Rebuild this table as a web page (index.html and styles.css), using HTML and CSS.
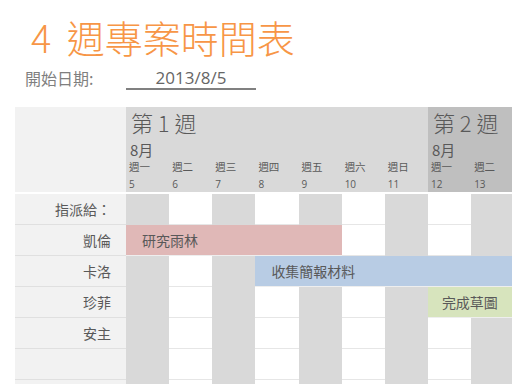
FILE: index.html
```html
<!DOCTYPE html>
<html lang="zh-Hant">
<head>
<meta charset="utf-8">
<title>4 週專案時間表</title>
<link rel="stylesheet" href="styles.css">
</head>
<body>
<div class="page">
  <h1 class="title">4 週專案時間表</h1>
  <div class="start">
    <span class="start-label">開始日期:</span>
    <span class="start-date">2013/8/5</span>
  </div>
  <div class="schedule">
    <div class="head">
      <div class="head-label"></div>
      <div class="week week-1">
        <div class="week-title">第 1 週</div>
        <div class="week-month">8月</div>
        <div class="days">
          <span>週一</span><span>週二</span><span>週三</span><span>週四</span><span>週五</span><span>週六</span><span>週日</span>
        </div>
        <div class="dates">
          <span>5</span><span>6</span><span>7</span><span>8</span><span>9</span><span>10</span><span>11</span>
        </div>
      </div>
      <div class="week week-2">
        <div class="week-title">第 2 週</div>
        <div class="week-month">8月</div>
        <div class="days">
          <span>週一</span><span>週二</span>
        </div>
        <div class="dates">
          <span>12</span><span>13</span>
        </div>
      </div>
    </div>

    <div class="row">
      <div class="name">指派給：</div>
      <div class="cell g"></div><div class="cell w"></div><div class="cell g"></div><div class="cell w"></div><div class="cell g"></div><div class="cell w"></div><div class="cell g"></div>
      <div class="cell w"></div><div class="cell g"></div>
    </div>

    <div class="row">
      <div class="name">凱倫</div>
      <div class="bar bar-pink span-5">研究雨林</div>
      <div class="cell w"></div><div class="cell g"></div>
      <div class="cell w"></div><div class="cell g"></div>
    </div>

    <div class="row">
      <div class="name">卡洛</div>
      <div class="cell g"></div><div class="cell w"></div><div class="cell g"></div>
      <div class="bar bar-blue span-6">收集簡報材料</div>
    </div>

    <div class="row">
      <div class="name">珍菲</div>
      <div class="cell g"></div><div class="cell w"></div><div class="cell g"></div><div class="cell w"></div><div class="cell g"></div><div class="cell w"></div><div class="cell g"></div>
      <div class="bar bar-green span-2">完成草圖</div>
    </div>

    <div class="row">
      <div class="name">安主</div>
      <div class="cell g"></div><div class="cell w"></div><div class="cell g"></div><div class="cell w"></div><div class="cell g"></div><div class="cell w"></div><div class="cell g"></div>
      <div class="cell w"></div><div class="cell g"></div>
    </div>

    <div class="row">
      <div class="name"></div>
      <div class="cell g"></div><div class="cell w"></div><div class="cell g"></div><div class="cell w"></div><div class="cell g"></div><div class="cell w"></div><div class="cell g"></div>
      <div class="cell w"></div><div class="cell g"></div>
    </div>

    <div class="row">
      <div class="name"></div>
      <div class="cell g"></div><div class="cell w"></div><div class="cell g"></div><div class="cell w"></div><div class="cell g"></div><div class="cell w"></div><div class="cell g"></div>
      <div class="cell w"></div><div class="cell g"></div>
    </div>
  </div>
</div>
</body>
</html>
```

FILE: styles.css
```css
html, body {
  margin: 0;
  padding: 0;
  background: #ffffff;
}

body {
  width: 512px;
  height: 384px;
  overflow: hidden;
  font-family: "Open Sans", "Noto Sans CJK TC", sans-serif;
  color: #595959;
}

.page {
  width: 512px;
  height: 384px;
  overflow: hidden;
}

.title {
  margin: 14px 0 0 0;
  padding-left: 31px;
  font-family: "Noto Sans CJK TC", sans-serif;
  font-size: 38px;
  font-weight: 300;
  line-height: 46px;
  word-spacing: 7px;
  color: #f79646;
  white-space: nowrap;
}

.start {
  display: flex;
  align-items: flex-start;
  margin-top: 6px;
  padding-left: 25px;
  height: 24px;
}

.start-label {
  width: 101px;
  font-family: "Noto Sans CJK TC", sans-serif;
  font-size: 16px;
  line-height: 24px;
  color: #7f7f7f;
}

.start-date {
  width: 130px;
  height: 22px;
  text-align: center;
  font-size: 17px;
  line-height: 24px;
  color: #666666;
  border-bottom: 2px solid #808080;
}

.schedule {
  margin: 17px 0 0 15px;
  width: 497px;
  overflow: hidden;
}

.head {
  display: grid;
  grid-template-columns: 111px 302px 84px;
  height: 85px;
  margin-bottom: 2px;
}

.head-label {
  background: #f2f2f2;
}

.week {
  padding-left: 3px;
  color: #595959;
  white-space: nowrap;
}

.week-1 {
  background: #d9d9d9;
}

.week-2 {
  background: #bfbfbf;
}

.week-title {
  padding: 1px 0 0 2px;
  font-family: "Noto Sans CJK TC", sans-serif;
  font-size: 22px;
  line-height: 29px;
  font-weight: 300;
}

.week-month {
  padding: 2px 0 0 1px;
  font-family: "Noto Sans CJK TC", sans-serif;
  font-size: 15px;
  line-height: 22px;
}

.days, .dates {
  display: grid;
  grid-template-columns: repeat(7, 43.14px);
}

.week-2 .days, .week-2 .dates {
  grid-template-columns: repeat(2, 43.14px);
}

.days {
  font-family: "Noto Sans CJK TC", sans-serif;
  font-size: 10.5px;
  line-height: 12px;
}

.dates {
  padding-top: 4px;
  font-size: 10px;
  line-height: 14px;
}

.row {
  display: grid;
  grid-template-columns: 111px repeat(9, 43.14px);
  height: 31px;
}

.name {
  background: #f2f2f2;
  border-bottom: 1px solid #e0e0e0;
  padding-right: 15px;
  text-align: right;
  font-family: "Noto Sans CJK TC", sans-serif;
  font-size: 14px;
  line-height: 30px;
  color: #595959;
}

.cell {
  border-bottom: 1px solid #e6e6e6;
}

.cell.g {
  background: #d9d9d9;
  border-bottom-color: #d9d9d9;
}

.cell.w {
  background: #ffffff;
}

.bar {
  padding-left: 16px;
  font-family: "Noto Sans CJK TC", sans-serif;
  font-size: 14px;
  line-height: 30px;
  color: #595959;
  border-bottom: 1px solid #eeeeee;
  white-space: nowrap;
  overflow: hidden;
}

.bar-green {
  padding-left: 14px;
}

.span-2 { grid-column: span 2; }
.span-5 { grid-column: span 5; }
.span-6 { grid-column: span 6; }

.bar-pink { background: #e0b8b7; }
.bar-blue { background: #b8cce4; }
.bar-green { background: #d7e4bd; }
```
